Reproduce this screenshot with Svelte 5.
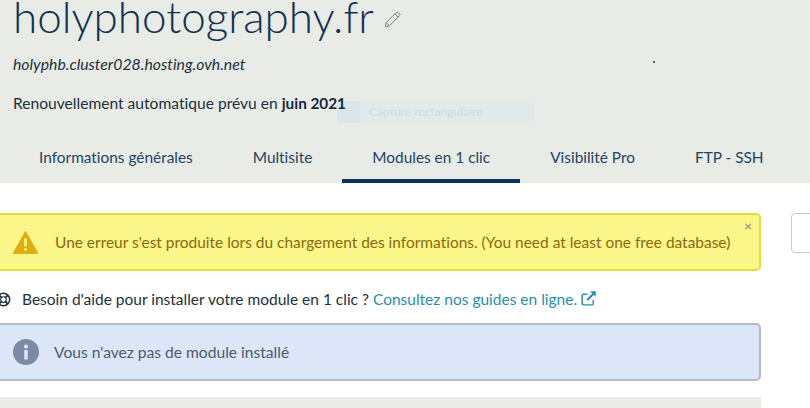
<script>
  const tabs = ['Informations générales', 'Multisite', 'Modules en 1 clic', 'Visibilité Pro', 'FTP - SSH'];
  const activeTab = 'Modules en 1 clic';
</script>

<div class="page">
  <header class="hero">
    <h1>holyphotography.fr
      <svg class="pencil" viewBox="0 0 18 18" width="18" height="18" fill="none" stroke="#6f7a82" stroke-width="1">
        <path d="M2.2 12.6 12.4 2.4a1.2 1.2 0 0 1 1.7 0l1.5 1.5a1.2 1.2 0 0 1 0 1.7L5.4 15.8 1.4 16.6Z" />
        <path d="M10.8 4 14 7.2M2.2 12.6l3.2 3.2" />
      </svg>
    </h1>
    <p class="cluster">holyphb.cluster028.hosting.ovh.net</p>
    <p class="renew">Renouvellement automatique prévu en <strong>juin 2021</strong></p>
    <nav class="tabs">
      {#each tabs as tab}
        <a class="tab" class:active={tab === activeTab} href="#top">{tab}</a>
      {/each}
    </nav>
    <!-- leftovers of the screen capture tool -->
    <div class="capture"><span class="capture-icon"></span><span class="capture-label">Capture rectangulaire</span></div>
    <span class="speck"></span>
  </header>

  <main class="content">
    <div class="column">
      <div class="alert warning">
        <svg class="alert-icon" viewBox="0 0 28 26" width="27" height="24">
          <path d="M14 1.5 27.5 25.5H.5Z" fill="#dcae12" stroke="#dcae12" stroke-linejoin="round" />
          <rect x="12.6" y="9" width="2.8" height="9" rx="1" fill="#fbf68a" />
          <rect x="12.6" y="19.6" width="2.8" height="2.8" fill="#fbf68a" />
        </svg>
        <span>Une erreur s'est produite lors du chargement des informations. (You need at least one free database)</span>
        <span class="close">×</span>
      </div>

      <p class="help">
        <svg class="lifebuoy" viewBox="0 0 16 16" width="15" height="15" fill="none" stroke="#1f3344">
          <circle cx="8" cy="8" r="6.6" stroke-width="1.6" />
          <circle cx="8" cy="8" r="3" stroke-width="1.2" />
          <path d="M3.4 3.4 6 6M12.6 3.4 10 6M3.4 12.6 6 10M12.6 12.6 10 10" stroke-width="2" />
        </svg>
        Besoin d'aide pour installer votre module en 1 clic ?
        <a href="#top">Consultez nos guides en ligne.<svg viewBox="0 0 16 16" width="17" height="17" fill="none" stroke="#2a8db5" stroke-width="1.4">
            <path d="M12.5 9.5v3.2a1.3 1.3 0 0 1-1.3 1.3H3.3A1.3 1.3 0 0 1 2 12.7V5.3A1.3 1.3 0 0 1 3.3 4H7" />
            <path d="M6.8 9.4 13.4 2.8" stroke-width="2" />
            <path d="M9.6 1.2h5.2v5.2Z" fill="#2a8db5" stroke="none" />
          </svg>
        </a>
      </p>

      <div class="alert info">
        <svg class="alert-icon" viewBox="0 0 26 26" width="26" height="26">
          <circle cx="13" cy="13" r="13" fill="#7b8ba6" />
          <circle cx="13" cy="7.6" r="2.1" fill="#dce6f8" />
          <rect x="11.2" y="11" width="3.6" height="9.6" rx=".8" fill="#dce6f8" />
        </svg>
        <span>Vous n'avez pas de module installé</span>
      </div>

      <div class="table-head"></div>
    </div>
    <div class="side-box"></div>
  </main>
</div>

<style>
  :global(body) {
    margin: 0;
    background: #fff;
    overflow: hidden;
  }

  .page {
    width: 810px;
    height: 408px;
    overflow: hidden;
    font-family: 'Lato', 'Noto Sans', sans-serif;
    font-size: 15.6px;
    font-variant-ligatures: none;
    color: #1f3344;
  }

  .hero {
    position: relative;
    display: flex;
    flex-direction: column;
    height: 183px;
    background: #e9ebe7;
    padding-left: 13px;
    box-sizing: border-box;
  }

  h1 {
    margin: 0;
    height: 40px;
    font-size: 44px;
    line-height: 32px;
    font-weight: 300;
    color: #12324f;
    white-space: nowrap;
  }

  .pencil {
    margin-left: -1px;
    vertical-align: 5px;
  }

  .cluster {
    margin: 15px 0 0;
    line-height: 18px;
    font-size: 15.8px;
    font-style: italic;
    color: #22303c;
  }

  .renew {
    position: relative;
    z-index: 1;
    margin: 21px 0 0;
    line-height: 18px;
    color: #22303c;
  }

  .renew strong {
    font-size: 15.3px;
    color: #14283a;
  }

  .tabs {
    display: flex;
    margin: auto 0 0 -4px;
  }

  .tab {
    padding: 0 30px;
    height: 48px;
    line-height: 44px;
    box-sizing: border-box;
    font-size: 15.4px;
    color: #24445f;
    text-decoration: none;
    white-space: nowrap;
  }

  .tab.active {
    border-bottom: 4px solid #0a3560;
  }

  .capture {
    position: absolute;
    left: 337px;
    top: 101px;
    width: 198px;
    height: 22px;
    display: flex;
    background: #e2e9e9;
  }

  .capture-icon {
    width: 23px;
    background: #dbe5ea;
  }

  .capture-label {
    margin-left: 9px;
    font-size: 12px;
    line-height: 22px;
    color: #d3dcdd;
  }

  .speck {
    position: absolute;
    left: 653px;
    top: 61px;
    width: 2px;
    height: 2px;
    border-radius: 50%;
    background: #2a2a80;
  }

  .content {
    display: flex;
    gap: 30px;
    margin: 30px 0 0 -20px;
    align-items: flex-start;
  }

  .column {
    flex: 0 0 781px;
  }

  .side-box {
    flex: 0 0 60px;
    height: 38px;
    border: 1px solid #c8c8c8;
    border-radius: 4px;
  }

  .alert {
    position: relative;
    display: flex;
    align-items: center;
    box-sizing: border-box;
    border-radius: 5px;
    padding-left: 30px;
    white-space: nowrap;
  }

  .alert.warning {
    height: 58px;
    background: #fbf68a;
    border: 2px solid #e4df3a;
    color: #8a6a0a;
    font-size: 15.46px;
    gap: 16px;
  }

  .alert.info {
    height: 58px;
    padding-left: 31px;
    background: #dce6f8;
    border: 2px solid #b0b9cf;
    color: #4d5a6e;
    gap: 15px;
  }

  .close {
    position: absolute;
    right: 7px;
    top: 2px;
    font-size: 14px;
    line-height: 18px;
    color: #7f8a80;
  }

  .help {
    margin: 18px 0 14px;
    padding-left: 16px;
    display: flex;
    align-items: center;
    height: 20px;
    line-height: 20px;
    font-size: 15.5px;
    white-space: nowrap;
    color: #22303c;
  }

  .lifebuoy {
    margin-right: 11px;
  }

  .help a {
    margin-left: 4px;
    color: #2a8fa8;
    text-decoration: none;
  }

  .help a svg {
    margin-left: 3px;
    vertical-align: -2px;
  }

  .table-head {
    margin-top: 16px;
    height: 20px;
    background: #ebebe7;
  }
</style>
